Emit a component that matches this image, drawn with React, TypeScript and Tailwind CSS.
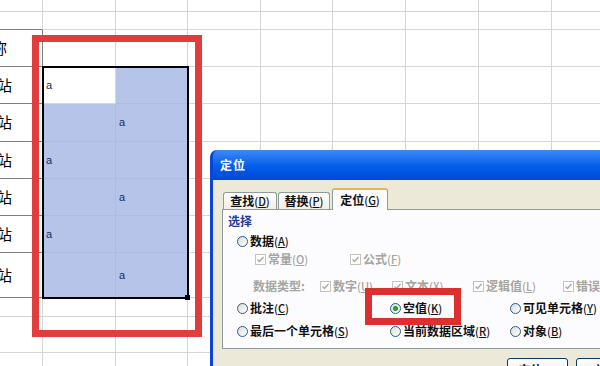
import React from 'react';

const ROWS = 12;
const COLS = 9;

function cellClass(r: number, c: number) {
  const inSel = (c === 1 || c === 2) && r >= 3 && r <= 8;
  if (inSel && !(r === 3 && c === 1)) {
    return 'bg-[#b5c4e8] border-r border-b border-[#adbce1]';
  }
  if (c === 0 && r >= 2 && r <= 8) {
    return 'bg-white border-r border-b border-[#7d7d7d]';
  }
  if (c === 0 && r === 1) {
    return 'bg-white border-r border-[#d6d6d6] border-b border-b-[#7d7d7d]';
  }
  return 'bg-white border-r border-b border-[#d6d6d6]';
}

function cellText(r: number, c: number) {
  if (c === 0 && r === 2) return <span className="ml-[-8px] text-[15px] text-black">称</span>;
  if (c === 0 && r >= 3 && r <= 8) return <span className="ml-[-3px] text-[15px] text-black">站</span>;
  if (c === 1 && (r === 3 || r === 5 || r === 7)) return <span className="pl-[3px] text-[11px] text-[#1d2b5a] font-['Liberation_Sans',sans-serif]">a</span>;
  if (c === 2 && (r === 4 || r === 6 || r === 8)) return <span className="pl-[3px] text-[11px] text-[#1d2b5a] font-['Liberation_Sans',sans-serif]">a</span>;
  return null;
}

function Sheet() {
  const cells = [];
  for (let r = 0; r < ROWS; r++) {
    for (let c = 0; c < COLS; c++) {
      cells.push(
        <div key={`${r}-${c}`} className={`flex items-center overflow-visible ${cellClass(r, c)}`}>
          {cellText(r, c)}
        </div>
      );
    }
  }
  return (
    <div className="grid grid-cols-[43px_73px_72px_73px_72px_73px_73px_73px_73px] grid-rows-[12px_18px_37px_37px_38px_37px_37px_37px_45px_19px_36px_40px] font-['Noto_Sans_CJK_SC',sans-serif]">
      {cells}
    </div>
  );
}

function Key({ text, k }: { text: string; k: string }) {
  return (
    <span className="whitespace-nowrap">
      {text}
      <span className="text-[11px] font-medium">(<span className="underline">{k}</span>)</span>
    </span>
  );
}

function Radio({ text, k, checked = false }: { text: string; k: string; checked?: boolean }) {
  return (
    <span className="flex items-center gap-[2px]">
      <span className="w-[11px] h-[11px] rounded-full border border-[#2b5d8f] bg-gradient-to-br from-[#dcdcd4] to-white flex items-center justify-center">
        {checked && <span className="w-[5px] h-[5px] rounded-full bg-[#2a9a2a]" />}
      </span>
      <Key text={text} k={k} />
    </span>
  );
}

function Check({ text, k }: { text: string; k: string }) {
  return (
    <span className="flex items-center gap-[2px] text-[#a5a49f]">
      <span className="w-[11px] h-[11px] border border-[#c4c3bd] bg-white flex items-center justify-center">
        <svg width="9" height="9" viewBox="0 0 9 9">
          <path d="M1.5 4.5 L3.5 6.5 L7.5 2" fill="none" stroke="#a9a8a2" strokeWidth="1.4" />
        </svg>
      </span>
      <Key text={text} k={k} />
    </span>
  );
}

function Dialog() {
  return (
    <div className="absolute left-[210px] top-[150px] w-[430px] h-[240px] rounded-t-[7px] border-x-[3px] border-[#0a45d6] bg-[#0a45d6] overflow-hidden font-['Noto_Sans_CJK_SC',sans-serif] text-[12px] text-[#111] font-bold">
      <div className="h-[30px] flex items-center pl-[7px] bg-gradient-to-b from-[#3b8af8] via-[#0560ea] to-[#0148d8]">
        <span className="text-white font-bold text-[12px] tracking-[1px]">定位</span>
      </div>
      <div className="h-full bg-[#ece9d8] pl-[9px] pt-[8px]">
        <div className="flex items-end h-[21px] pl-[1px] relative z-10">
          <div className="w-[54px] h-[17px] mr-[1px] border border-b-0 border-[#919b9c] rounded-t-[3px] bg-gradient-to-b from-white to-[#f0efe8] flex items-center justify-center">
            <Key text="查找" k="D" />
          </div>
          <div className="w-[52px] h-[17px] mr-[2px] border border-b-0 border-[#919b9c] rounded-t-[3px] bg-gradient-to-b from-white to-[#f0efe8] flex items-center justify-center">
            <Key text="替换" k="P" />
          </div>
          <div className="w-[56px] h-[22px] mb-[-1px] border border-b-0 border-[#919b9c] border-t-2 border-t-[#e7b35a] rounded-t-[3px] bg-[#fcfcfe] flex items-center justify-center">
            <Key text="定位" k="G" />
          </div>
        </div>
        <div className="w-[406px] h-[140px] border border-[#919b9c] bg-[#fcfcfe] pl-[5px] flex flex-col">
          <div className="h-[22px] flex items-center text-[#1f3d9b]">选择</div>
          <div className="h-[18px] flex items-center pl-[9px]">
            <Radio text="数据" k="A" />
          </div>
          <div className="h-[18px] flex items-center pl-[27px]">
            <span className="w-[95px]"><Check text="常量" k="O" /></span>
            <Check text="公式" k="F" />
          </div>
          <div className="mt-[9px] h-[18px] flex items-center pl-[25px] text-[#a5a49f]">
            <span className="w-[67px]">数据类型:</span>
            <span className="w-[72px]"><Check text="数字" k="U" /></span>
            <span className="w-[81px]"><Check text="文本" k="X" /></span>
            <span className="w-[90px]"><Check text="逻辑值" k="L" /></span>
            <Check text="错误值" k="E" />
          </div>
          <div className="mt-[4px] h-[18px] flex items-center pl-[9px]">
            <span className="w-[153px]"><Radio text="批注" k="C" /></span>
            <span className="w-[120px]"><Radio text="空值" k="K" checked /></span>
            <Radio text="可见单元格" k="Y" />
          </div>
          <div className="mt-[5px] h-[18px] flex items-center pl-[9px]">
            <span className="w-[153px]"><Radio text="最后一个单元格" k="S" /></span>
            <span className="w-[120px]"><Radio text="当前数据区域" k="R" /></span>
            <Radio text="对象" k="B" />
          </div>
        </div>
        <div className="flex mt-[9px] ml-[285px] gap-[8px]">
          <button className="w-[75px] h-[23px] rounded-[3px] border border-[#003c74] bg-gradient-to-b from-white to-[#e6e4da] text-[12px]">
            <Key text="定位" k="S" />
          </button>
          <button className="w-[75px] h-[23px] rounded-[3px] border border-[#003c74] bg-gradient-to-b from-white to-[#e6e4da] text-[12px]">
            关闭
          </button>
        </div>
      </div>
    </div>
  );
}

export default function App() {
  return (
    <div className="relative w-[600px] h-[366px] overflow-hidden bg-white">
      <Sheet />
      {/* selection outline + fill handle */}
      <div className="absolute left-[42px] top-[66px] w-[147px] h-[233px] border-2 border-black" />
      <div className="absolute left-[185px] top-[295px] w-[5px] h-[5px] bg-black" />
      <Dialog />
      {/* red annotation boxes */}
      <div className="absolute left-[32px] top-[35px] w-[170px] h-[302px] border-[7px] border-[#e23d3d]" />
      <div className="absolute left-[365px] top-[288px] w-[96px] h-[37px] border-[7px] border-[#dc3030]" />
    </div>
  );
}
